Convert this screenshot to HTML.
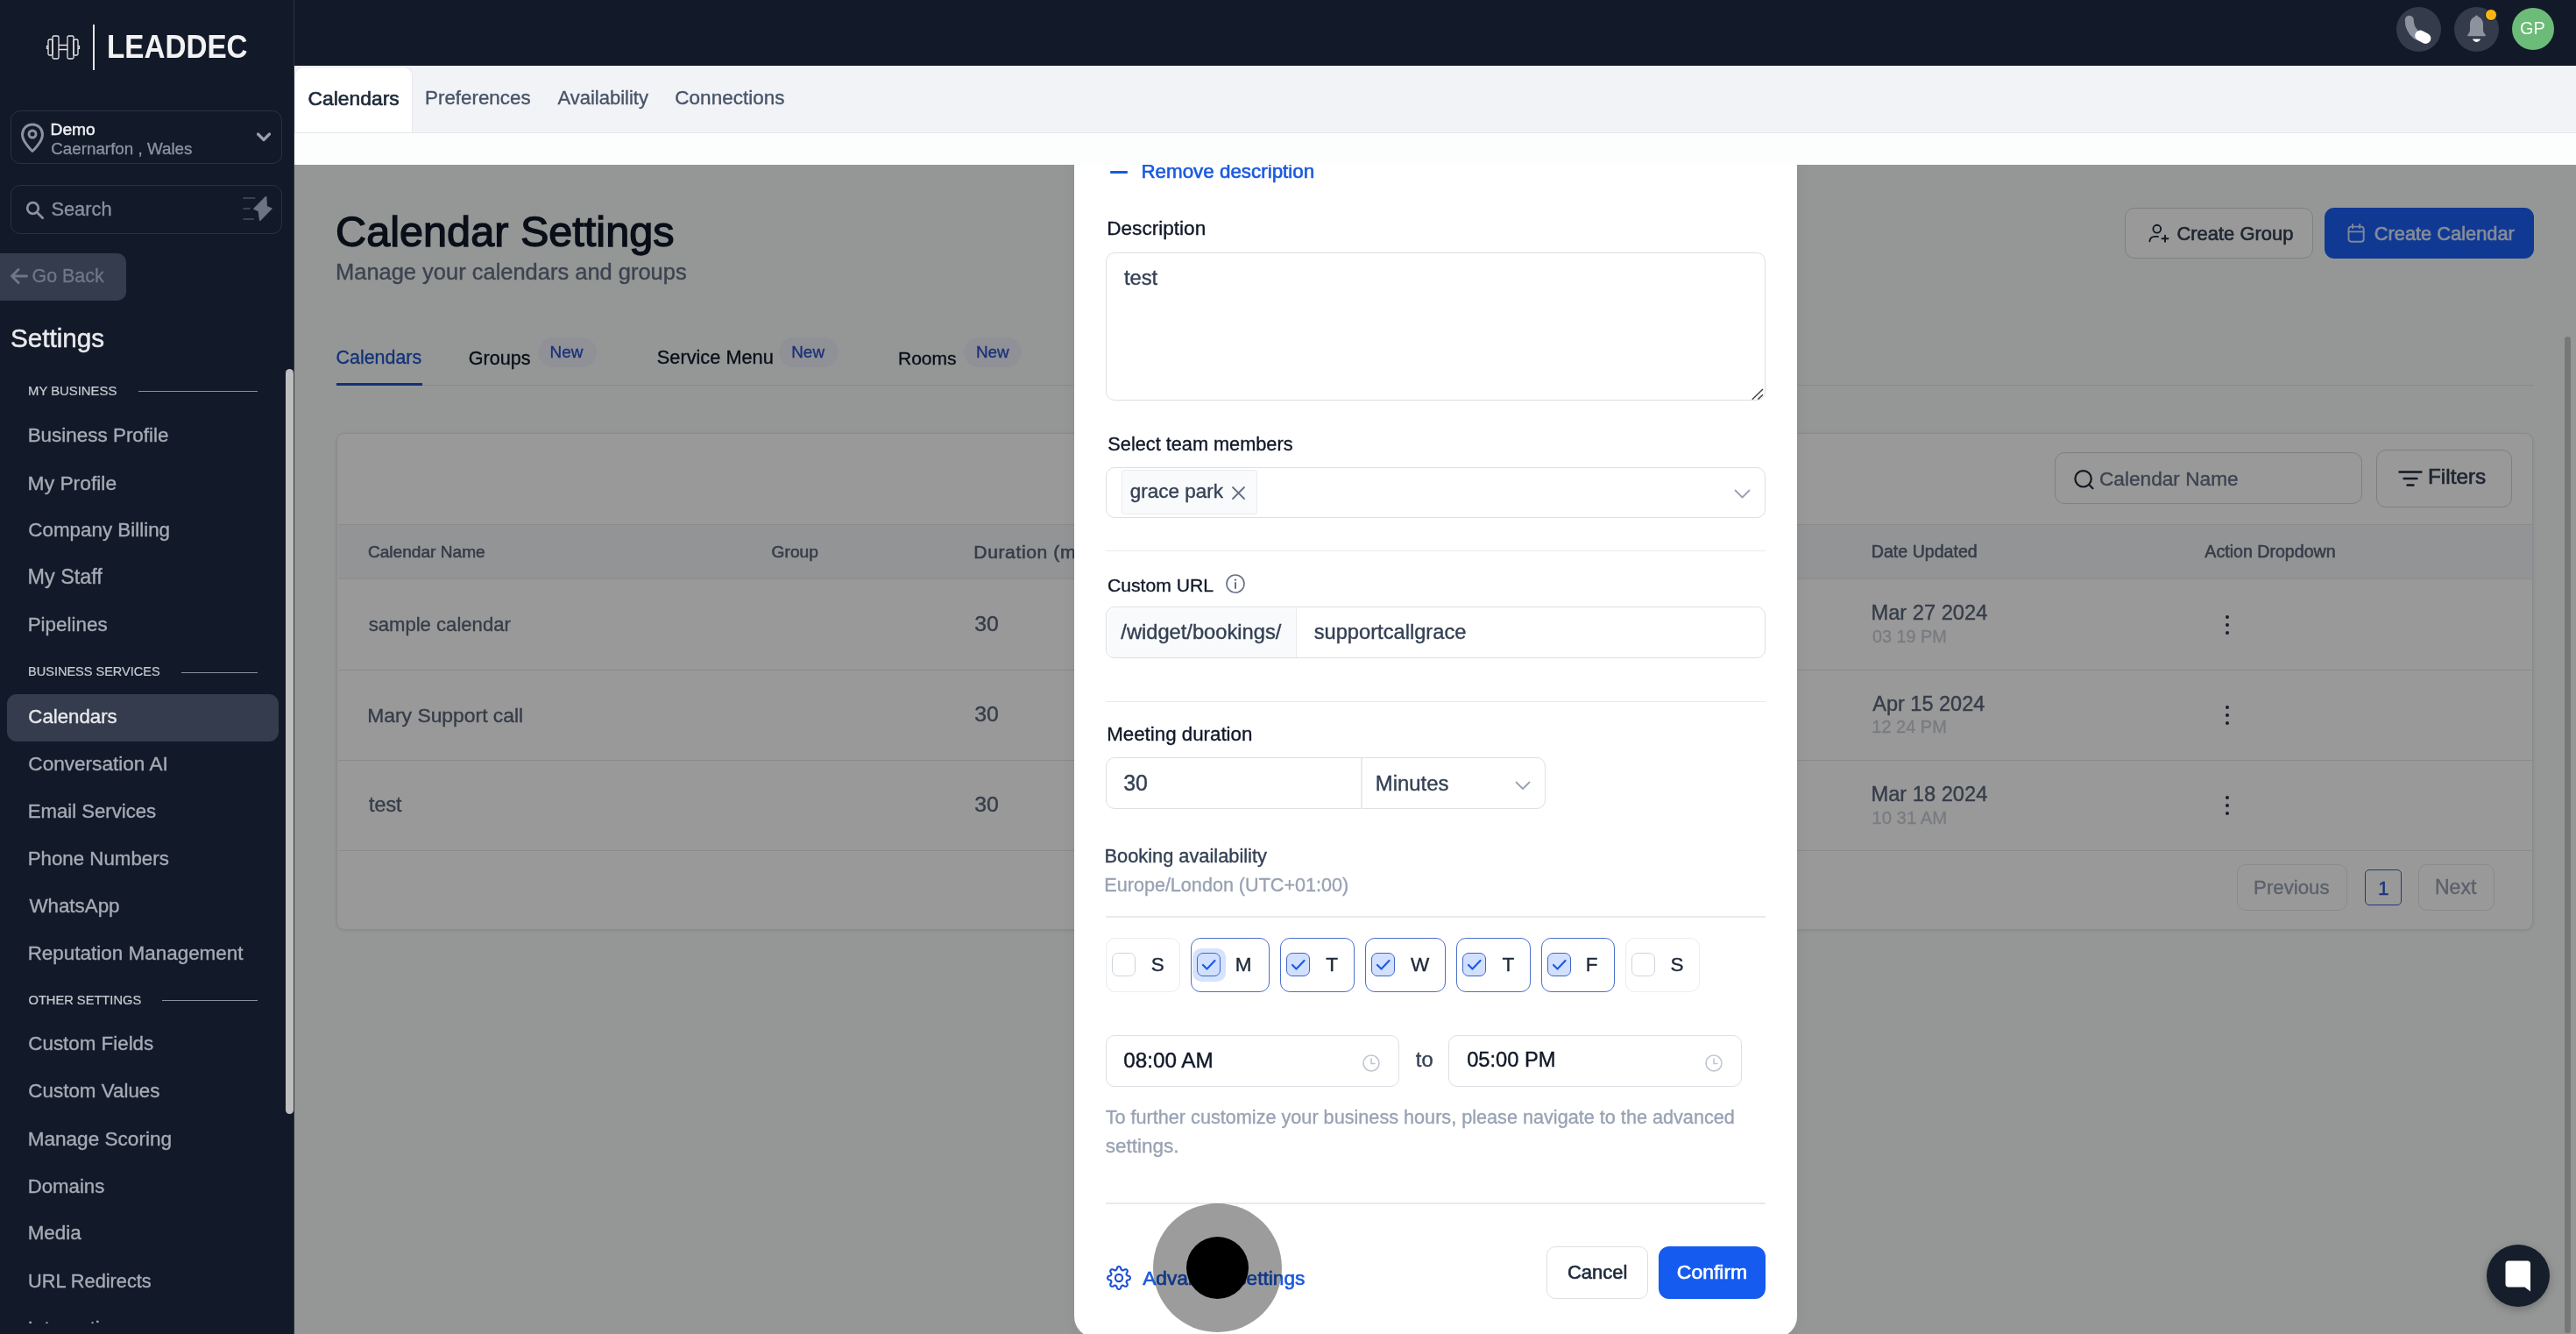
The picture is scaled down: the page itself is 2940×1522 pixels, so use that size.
<!DOCTYPE html>
<html><head><meta charset="utf-8"><style>
html,body{margin:0;padding:0;width:2940px;height:1522px;overflow:hidden;background:#ffffff;font-family:"Liberation Sans",sans-serif;}
.L{position:absolute;left:0;top:0;width:2940px;height:1522px;will-change:transform;}
.L>div,.L>span,.L>svg{position:absolute;box-sizing:border-box;}
.L>span{white-space:pre;}
</style></head><body>
<div class="L" id="L_page"><div style="left:336.0px;top:188.0px;width:2604.0px;height:1334.0px;background:#f9fcfb"></div>
<span style="left:383.12px;top:240.15px;font-size:48.61px;line-height:48.61px;font-weight:400;-webkit-text-stroke:1.36px #101828;color:#101828;letter-spacing:0.000px;">Calendar Settings</span>
<span style="left:383.01px;top:298.24px;font-size:25.48px;line-height:25.48px;font-weight:400;-webkit-text-stroke:0.41px #667085;color:#667085;letter-spacing:0.000px;">Manage your calendars and groups</span>
<span style="left:383.50px;top:397.66px;font-size:21.43px;line-height:21.43px;font-weight:400;-webkit-text-stroke:0.34px #1f54c9;color:#1f54c9;letter-spacing:0.000px;">Calendars</span>
<span style="left:534.69px;top:397.50px;font-size:21.62px;line-height:21.62px;font-weight:400;-webkit-text-stroke:0.35px #101828;color:#101828;letter-spacing:0.000px;">Groups</span>
<span style="left:749.82px;top:397.38px;font-size:21.75px;line-height:21.75px;font-weight:400;-webkit-text-stroke:0.35px #101828;color:#101828;letter-spacing:-0.000px;">Service Menu</span>
<span style="left:1024.95px;top:397.97px;font-size:21.06px;line-height:21.06px;font-weight:400;-webkit-text-stroke:0.34px #101828;color:#101828;letter-spacing:0.000px;">Rooms</span>
<div style="left:613.6px;top:385.4px;width:67.1px;height:33.9px;background:#eff2fb;border-radius:17px"></div>
<span style="left:627.52px;top:392.88px;font-size:18.92px;line-height:18.92px;font-weight:400;-webkit-text-stroke:0.30px #2b50c8;color:#2b50c8;letter-spacing:-0.000px;">New</span>
<div style="left:889.3px;top:385.4px;width:67.4px;height:33.9px;background:#eff2fb;border-radius:17px"></div>
<span style="left:903.22px;top:392.88px;font-size:18.92px;line-height:18.92px;font-weight:400;-webkit-text-stroke:0.30px #2b50c8;color:#2b50c8;letter-spacing:-0.000px;">New</span>
<div style="left:1100.0px;top:385.4px;width:66.0px;height:33.9px;background:#eff2fb;border-radius:17px"></div>
<span style="left:1113.92px;top:392.88px;font-size:18.92px;line-height:18.92px;font-weight:400;-webkit-text-stroke:0.30px #2b50c8;color:#2b50c8;letter-spacing:-0.000px;">New</span>
<div style="left:384.0px;top:438.5px;width:2508.0px;height:1.5px;background:#e4e7ec"></div>
<div style="left:384.0px;top:437.0px;width:98.0px;height:3.3px;background:#1f54c9"></div>
<div style="left:2425.4px;top:236.6px;width:214.9px;height:58.7px;background:#fff;border:1.5px solid #d0d5dd;border-radius:11px"></div>
<svg style="left:2451.0px;top:253.0px;" width="26.0" height="26.0" viewBox="0 0 26 26" fill="none"><circle cx="10.8" cy="8.2" r="4.4" stroke="#1d2939" stroke-width="1.9"/><path d="M2.4 22.2c.4-3.2 3-5.3 6.4-5.3h3.2" stroke="#1d2939" stroke-width="1.9" stroke-linecap="round"/><path d="M20 15.8v7M16.5 19.3h7" stroke="#1d2939" stroke-width="1.9" stroke-linecap="round"/></svg>
<span style="left:2484.47px;top:255.73px;font-size:21.94px;line-height:21.94px;font-weight:400;-webkit-text-stroke:0.61px #344054;color:#344054;letter-spacing:0.000px;">Create Group</span>
<div style="left:2653.2px;top:236.6px;width:238.6px;height:58.7px;background:#1a5ff5;border-radius:11px"></div>
<svg style="left:2678.0px;top:254.0px;" width="23.0" height="24.0" viewBox="0 0 23 24" fill="none"><rect x="2.5" y="4.6" width="17.2" height="17.2" rx="3" stroke="#d6e2ff" stroke-width="1.9"/><path d="M2.5 10.4h17.2M7 2v4.2M15.2 2v4.2" stroke="#d6e2ff" stroke-width="1.9" stroke-linecap="round"/></svg>
<span style="left:2709.78px;top:255.83px;font-size:21.82px;line-height:21.82px;font-weight:400;-webkit-text-stroke:0.61px #dfe8ff;color:#dfe8ff;letter-spacing:0.000px;">Create Calendar</span>
<div style="left:384.4px;top:494.4px;width:2507.0px;height:566.9px;background:#fff;border:1.5px solid #e4e7ec;border-radius:9px;box-shadow:0 1px 4px rgba(16,24,40,0.10)"></div>
<div style="left:2345.2px;top:516.4px;width:351.2px;height:59.1px;background:#fff;border:1.5px solid #d0d5dd;border-radius:11px"></div>
<svg style="left:2366.0px;top:535.0px;" width="26.0" height="26.0" viewBox="0 0 26 26" fill="none"><circle cx="11.6" cy="11.3" r="9.2" stroke="#1d2939" stroke-width="2.2"/><path d="M18.5 18.2l4 4" stroke="#1d2939" stroke-width="2.2" stroke-linecap="round"/></svg>
<span style="left:2395.94px;top:534.71px;font-size:22.67px;line-height:22.67px;font-weight:400;-webkit-text-stroke:0.36px #667085;color:#667085;letter-spacing:0.000px;">Calendar Name</span>
<div style="left:2712.1px;top:513.0px;width:154.5px;height:65.6px;background:#fff;border:1.5px solid #d0d5dd;border-radius:11px"></div>
<svg style="left:2736.0px;top:535.0px;" width="30.0" height="22.0" viewBox="0 0 30 22" fill="none"><path d="M2.5 3.5h25M7.5 11h15M11.5 18.5h7" stroke="#1d2939" stroke-width="2.4" stroke-linecap="round"/></svg>
<span style="left:2771.00px;top:532.43px;font-size:24.30px;line-height:24.30px;font-weight:400;-webkit-text-stroke:0.68px #344054;color:#344054;letter-spacing:-0.000px;">Filters</span>
<div style="left:385.5px;top:597.5px;width:2504.8px;height:63.8px;background:#f6f7f9;border-top:1.5px solid #e6e8ec;border-bottom:1.5px solid #e6e8ec"></div>
<span style="left:419.90px;top:620.32px;font-size:19.12px;line-height:19.12px;font-weight:400;-webkit-text-stroke:0.54px #5a667a;color:#5a667a;letter-spacing:0.000px;">Calendar Name</span>
<span style="left:880.60px;top:620.24px;font-size:19.21px;line-height:19.21px;font-weight:400;-webkit-text-stroke:0.54px #5a667a;color:#5a667a;letter-spacing:0.000px;">Group</span>
<span style="left:1111.35px;top:618.66px;font-size:21.08px;line-height:21.08px;font-weight:400;-webkit-text-stroke:0.59px #5a667a;color:#5a667a;letter-spacing:0.600px;">Duration (minutes)</span>
<span style="left:2135.77px;top:619.88px;font-size:19.63px;line-height:19.63px;font-weight:400;-webkit-text-stroke:0.55px #5a667a;color:#5a667a;letter-spacing:0.000px;">Date Updated</span>
<span style="left:2516.30px;top:619.90px;font-size:19.61px;line-height:19.61px;font-weight:400;-webkit-text-stroke:0.55px #5a667a;color:#5a667a;letter-spacing:0.000px;">Action Dropdown</span>
<div style="left:385.5px;top:763.5px;width:2504.8px;height:1.5px;background:#e4e7ec"></div>
<div style="left:385.5px;top:866.5px;width:2504.8px;height:1.5px;background:#e4e7ec"></div>
<div style="left:385.5px;top:969.8px;width:2504.8px;height:1.5px;background:#e4e7ec"></div>
<span style="left:420.65px;top:701.98px;font-size:22.11px;line-height:22.11px;font-weight:400;-webkit-text-stroke:0.35px #5a667a;color:#5a667a;letter-spacing:-0.000px;">sample calendar</span>
<span style="left:1112.22px;top:699.70px;font-size:24.81px;line-height:24.81px;font-weight:400;-webkit-text-stroke:0.40px #5a667a;color:#5a667a;letter-spacing:0.000px;">30</span>
<span style="left:2135.45px;top:687.96px;font-size:23.68px;line-height:23.68px;font-weight:400;-webkit-text-stroke:0.38px #5a667a;color:#5a667a;letter-spacing:-0.000px;">Mar 27 2024</span>
<span style="left:2136.98px;top:717.32px;font-size:19.82px;line-height:19.82px;font-weight:400;-webkit-text-stroke:0.32px #c9ced6;color:#c9ced6;letter-spacing:0.000px;">03 19 PM</span>
<div style="left:2539.9px;top:702.1px;width:4.4px;height:4.4px;background:#2a3346;border-radius:50%"></div>
<div style="left:2539.9px;top:710.9px;width:4.4px;height:4.4px;background:#2a3346;border-radius:50%"></div>
<div style="left:2539.9px;top:719.6px;width:4.4px;height:4.4px;background:#2a3346;border-radius:50%"></div>
<span style="left:419.21px;top:804.72px;font-size:22.89px;line-height:22.89px;font-weight:400;-webkit-text-stroke:0.37px #5a667a;color:#5a667a;letter-spacing:-0.000px;">Mary Support call</span>
<span style="left:1112.22px;top:803.10px;font-size:24.81px;line-height:24.81px;font-weight:400;-webkit-text-stroke:0.40px #5a667a;color:#5a667a;letter-spacing:0.000px;">30</span>
<span style="left:2137.30px;top:791.62px;font-size:23.49px;line-height:23.49px;font-weight:400;-webkit-text-stroke:0.38px #5a667a;color:#5a667a;letter-spacing:-0.000px;">Apr 15 2024</span>
<span style="left:2136.35px;top:820.29px;font-size:19.97px;line-height:19.97px;font-weight:400;-webkit-text-stroke:0.32px #c9ced6;color:#c9ced6;letter-spacing:0.000px;">12 24 PM</span>
<div style="left:2539.9px;top:805.1px;width:4.4px;height:4.4px;background:#2a3346;border-radius:50%"></div>
<div style="left:2539.9px;top:813.9px;width:4.4px;height:4.4px;background:#2a3346;border-radius:50%"></div>
<div style="left:2539.9px;top:822.6px;width:4.4px;height:4.4px;background:#2a3346;border-radius:50%"></div>
<span style="left:421.00px;top:906.99px;font-size:23.28px;line-height:23.28px;font-weight:400;-webkit-text-stroke:0.37px #5a667a;color:#5a667a;letter-spacing:-0.000px;">test</span>
<span style="left:1112.22px;top:905.70px;font-size:24.81px;line-height:24.81px;font-weight:400;-webkit-text-stroke:0.40px #5a667a;color:#5a667a;letter-spacing:0.000px;">30</span>
<span style="left:2135.45px;top:894.56px;font-size:23.68px;line-height:23.68px;font-weight:400;-webkit-text-stroke:0.38px #5a667a;color:#5a667a;letter-spacing:-0.000px;">Mar 18 2024</span>
<span style="left:2136.33px;top:922.99px;font-size:20.34px;line-height:20.34px;font-weight:400;-webkit-text-stroke:0.33px #c9ced6;color:#c9ced6;letter-spacing:-0.000px;">10 31 AM</span>
<div style="left:2539.9px;top:908.1px;width:4.4px;height:4.4px;background:#2a3346;border-radius:50%"></div>
<div style="left:2539.9px;top:916.9px;width:4.4px;height:4.4px;background:#2a3346;border-radius:50%"></div>
<div style="left:2539.9px;top:925.6px;width:4.4px;height:4.4px;background:#2a3346;border-radius:50%"></div>
<div style="left:2553.0px;top:986.2px;width:126.0px;height:53.1px;background:#fff;border:1.5px solid #e4e7ec;border-radius:10px"></div>
<span style="left:2572.06px;top:1001.87px;font-size:22.24px;line-height:22.24px;font-weight:400;-webkit-text-stroke:0.36px #98a2b3;color:#98a2b3;letter-spacing:-0.000px;">Previous</span>
<div style="left:2699.0px;top:992.0px;width:42.0px;height:41.0px;background:#fff;border:1.5px solid #3a62cc;border-radius:5px"></div>
<span style="left:2713.98px;top:1001.51px;font-size:22.67px;line-height:22.67px;font-weight:400;-webkit-text-stroke:0.36px #2a59cf;color:#2a59cf;letter-spacing:0.000px;">1</span>
<div style="left:2760.0px;top:986.2px;width:87.2px;height:53.1px;background:#fff;border:1.5px solid #e4e7ec;border-radius:10px"></div>
<span style="left:2779.00px;top:1001.22px;font-size:23.01px;line-height:23.01px;font-weight:400;-webkit-text-stroke:0.37px #98a2b3;color:#98a2b3;letter-spacing:0.000px;">Next</span>
<div style="left:2926.5px;top:384.4px;width:7.5px;height:1136.6px;background:#c6c6c6;border-radius:4px"></div></div>
<div class="L" id="L_overlay"><div style="left:336.0px;top:188.0px;width:2604.0px;height:1334.0px;background:rgba(0,0,0,0.4)"></div></div>
<div class="L" id="L_modal"><div style="left:1226.0px;top:120.0px;width:825.0px;height:1406.0px;background:#fff;border-radius:24px;box-shadow:0 0 16px rgba(16,24,40,0.06)"></div>
<div style="left:1266.6px;top:195.2px;width:20.4px;height:2.6px;background:#1a5ae0;border-radius:1px"></div>
<span style="left:1302.45px;top:184.65px;font-size:22.38px;line-height:22.38px;font-weight:400;-webkit-text-stroke:0.63px #1a5ae0;color:#1a5ae0;letter-spacing:0.000px;">Remove description</span>
<span style="left:1263.23px;top:250.37px;font-size:22.60px;line-height:22.60px;font-weight:400;-webkit-text-stroke:0.36px #101828;color:#101828;letter-spacing:0.000px;">Description</span>
<div style="left:1261.8px;top:287.6px;width:753.0px;height:169.4px;background:#fff;border:1.5px solid #dcdfe3;border-radius:10px"></div>
<span style="left:1283.00px;top:306.13px;font-size:23.71px;line-height:23.71px;font-weight:400;-webkit-text-stroke:0.38px #344054;color:#344054;letter-spacing:-0.000px;">test</span>
<svg style="left:1998.0px;top:441.5px;" width="16.0" height="16.0" viewBox="0 0 16 16" fill="none"><path d="M1.8 13.8L14 2M8.3 13.6L14 8.2" stroke="#454545" stroke-width="1.5"/></svg>
<span style="left:1264.32px;top:495.60px;font-size:21.73px;line-height:21.73px;font-weight:400;-webkit-text-stroke:0.35px #101828;color:#101828;letter-spacing:0.000px;">Select team members</span>
<div style="left:1261.8px;top:532.6px;width:753.0px;height:58.1px;background:#fff;border:1.5px solid #dcdfe3;border-radius:10px"></div>
<div style="left:1280.3px;top:536.3px;width:154.4px;height:50.3px;background:#f9fafb;border:1.5px solid #eaecf0;border-radius:3px"></div>
<span style="left:1289.80px;top:549.76px;font-size:22.49px;line-height:22.49px;font-weight:400;-webkit-text-stroke:0.36px #344054;color:#344054;letter-spacing:-0.000px;">grace park</span>
<svg style="left:1405.0px;top:554.0px;" width="17.0" height="17.0" viewBox="0 0 17 17" fill="none"><path d="M2 2l13 13M15 2L2 15" stroke="#667085" stroke-width="1.8" stroke-linecap="round"/></svg>
<svg style="left:1979.0px;top:557.0px;" width="19.0" height="13.0" viewBox="0 0 19 13" fill="none"><path d="M1.5 2.5l8 8 8-8" stroke="#98a2b3" stroke-width="1.8" stroke-linecap="round" stroke-linejoin="round"/></svg>
<div style="left:1261.8px;top:627.7px;width:753.0px;height:1.5px;background:#e9eaed"></div>
<span style="left:1264.01px;top:656.60px;font-size:21.14px;line-height:21.14px;font-weight:400;-webkit-text-stroke:0.34px #101828;color:#101828;letter-spacing:-0.000px;">Custom URL</span>
<svg style="left:1398.0px;top:654.0px;" width="24.0" height="24.0" viewBox="0 0 24 24" fill="none"><circle cx="12" cy="12" r="10" stroke="#667085" stroke-width="1.6"/><path d="M12 11v6" stroke="#667085" stroke-width="2" stroke-linecap="round"/><circle cx="12" cy="7.6" r="1.2" fill="#667085"/></svg>
<div style="left:1261.8px;top:692.2px;width:753.0px;height:59.1px;background:#fff;border:1.5px solid #dcdfe3;border-radius:10px"></div>
<div style="left:1263.5px;top:693.5px;width:216.0px;height:56.5px;background:#f9fafb;border-right:1.5px solid #eaecf0;border-radius:11px 0 0 11px"></div>
<span style="left:1279.30px;top:709.75px;font-size:23.69px;line-height:23.69px;font-weight:400;-webkit-text-stroke:0.38px #344054;color:#344054;letter-spacing:-0.000px;">/widget/bookings/</span>
<span style="left:1499.63px;top:709.75px;font-size:23.69px;line-height:23.69px;font-weight:400;-webkit-text-stroke:0.38px #344054;color:#344054;letter-spacing:-0.000px;">supportcallgrace</span>
<div style="left:1261.8px;top:799.8px;width:753.0px;height:1.5px;background:#e9eaed"></div>
<span style="left:1263.26px;top:827.11px;font-size:22.31px;line-height:22.31px;font-weight:400;-webkit-text-stroke:0.36px #101828;color:#101828;letter-spacing:-0.000px;">Meeting duration</span>
<div style="left:1261.8px;top:864.1px;width:501.9px;height:59.4px;background:#fff;border:1.5px solid #dcdfe3;border-radius:10px"></div>
<div style="left:1553.0px;top:865.0px;width:1.5px;height:57.5px;background:#e9eaed"></div>
<span style="left:1282.22px;top:881.32px;font-size:24.90px;line-height:24.90px;font-weight:400;-webkit-text-stroke:0.40px #344054;color:#344054;letter-spacing:-0.000px;">30</span>
<span style="left:1569.83px;top:882.19px;font-size:23.88px;line-height:23.88px;font-weight:400;-webkit-text-stroke:0.38px #344054;color:#344054;letter-spacing:0.000px;">Minutes</span>
<svg style="left:1729.0px;top:890.0px;" width="18.0" height="13.0" viewBox="0 0 18 13" fill="none"><path d="M1.5 2.5l7.5 7.5 7.5-7.5" stroke="#98a2b3" stroke-width="1.8" stroke-linecap="round" stroke-linejoin="round"/></svg>
<span style="left:1260.50px;top:965.94px;font-size:21.81px;line-height:21.81px;font-weight:400;-webkit-text-stroke:0.35px #344054;color:#344054;letter-spacing:-0.000px;">Booking availability</span>
<span style="left:1260.31px;top:999.33px;font-size:21.59px;line-height:21.59px;font-weight:400;-webkit-text-stroke:0.35px #98a2b3;color:#98a2b3;letter-spacing:0.000px;">Europe/London (UTC+01:00)</span>
<div style="left:1261.8px;top:1045.0px;width:753.0px;height:1.5px;background:#e9eaed"></div>
<div style="left:1262.2px;top:1070.2px;width:84.7px;height:61.4px;background:#fff;border:1.5px solid #eaecf0;border-radius:11px"></div>
<div style="left:1269.2px;top:1087.4px;width:27.0px;height:27.0px;background:#fff;border:1.5px solid #d0d5dd;border-radius:7px"></div>
<span style="left:1313.70px;top:1089.73px;font-size:22.53px;line-height:22.53px;font-weight:400;-webkit-text-stroke:0.36px #1d2939;color:#1d2939;letter-spacing:0.000px;">S</span>
<div style="left:1359.0px;top:1070.2px;width:89.9px;height:61.4px;background:#fff;border:1.4px solid #4a70cc;border-radius:11px"></div>
<div style="left:1361.0px;top:1081.5px;width:37.5px;height:38.5px;background:#d6e3fd;border-radius:10px"></div>
<div style="left:1366.0px;top:1087.4px;width:27.0px;height:27.0px;background:#d1e0ff;border:1.4px solid #4066c8;border-radius:7px"></div>
<svg style="left:1369.0px;top:1090.4px;" width="21.0" height="21.0" viewBox="0 0 21 21" fill="none"><path d="M4 11l4.5 4.5L17.5 6" stroke="#1f5ae0" stroke-width="2.2" stroke-linecap="round" stroke-linejoin="round"/></svg>
<span style="left:1409.84px;top:1089.73px;font-size:22.53px;line-height:22.53px;font-weight:400;-webkit-text-stroke:0.36px #1d2939;color:#1d2939;letter-spacing:0.000px;">M</span>
<div style="left:1461.1px;top:1070.2px;width:84.5px;height:61.4px;background:#fff;border:1.4px solid #4a70cc;border-radius:11px"></div>
<div style="left:1468.1px;top:1087.4px;width:27.0px;height:27.0px;background:#d1e0ff;border:1.4px solid #4066c8;border-radius:7px"></div>
<svg style="left:1471.1px;top:1090.4px;" width="21.0" height="21.0" viewBox="0 0 21 21" fill="none"><path d="M4 11l4.5 4.5L17.5 6" stroke="#1f5ae0" stroke-width="2.2" stroke-linecap="round" stroke-linejoin="round"/></svg>
<span style="left:1513.15px;top:1089.73px;font-size:22.53px;line-height:22.53px;font-weight:400;-webkit-text-stroke:0.36px #1d2939;color:#1d2939;letter-spacing:0.000px;">T</span>
<div style="left:1558.0px;top:1070.2px;width:91.6px;height:61.4px;background:#fff;border:1.4px solid #4a70cc;border-radius:11px"></div>
<div style="left:1565.0px;top:1087.4px;width:27.0px;height:27.0px;background:#d1e0ff;border:1.4px solid #4066c8;border-radius:7px"></div>
<svg style="left:1568.0px;top:1090.4px;" width="21.0" height="21.0" viewBox="0 0 21 21" fill="none"><path d="M4 11l4.5 4.5L17.5 6" stroke="#1f5ae0" stroke-width="2.2" stroke-linecap="round" stroke-linejoin="round"/></svg>
<span style="left:1610.00px;top:1089.73px;font-size:22.53px;line-height:22.53px;font-weight:400;-webkit-text-stroke:0.36px #1d2939;color:#1d2939;letter-spacing:0.000px;">W</span>
<div style="left:1661.9px;top:1070.2px;width:84.7px;height:61.4px;background:#fff;border:1.4px solid #4a70cc;border-radius:11px"></div>
<div style="left:1668.9px;top:1087.4px;width:27.0px;height:27.0px;background:#d1e0ff;border:1.4px solid #4066c8;border-radius:7px"></div>
<svg style="left:1671.9px;top:1090.4px;" width="21.0" height="21.0" viewBox="0 0 21 21" fill="none"><path d="M4 11l4.5 4.5L17.5 6" stroke="#1f5ae0" stroke-width="2.2" stroke-linecap="round" stroke-linejoin="round"/></svg>
<span style="left:1714.55px;top:1089.73px;font-size:22.53px;line-height:22.53px;font-weight:400;-webkit-text-stroke:0.36px #1d2939;color:#1d2939;letter-spacing:0.000px;">T</span>
<div style="left:1759.0px;top:1070.2px;width:84.0px;height:61.4px;background:#fff;border:1.4px solid #4a70cc;border-radius:11px"></div>
<div style="left:1766.0px;top:1087.4px;width:27.0px;height:27.0px;background:#d1e0ff;border:1.4px solid #4066c8;border-radius:7px"></div>
<svg style="left:1769.0px;top:1090.4px;" width="21.0" height="21.0" viewBox="0 0 21 21" fill="none"><path d="M4 11l4.5 4.5L17.5 6" stroke="#1f5ae0" stroke-width="2.2" stroke-linecap="round" stroke-linejoin="round"/></svg>
<span style="left:1809.74px;top:1089.73px;font-size:22.53px;line-height:22.53px;font-weight:400;-webkit-text-stroke:0.36px #1d2939;color:#1d2939;letter-spacing:0.000px;">F</span>
<div style="left:1855.3px;top:1070.2px;width:84.4px;height:61.4px;background:#fff;border:1.5px solid #eaecf0;border-radius:11px"></div>
<div style="left:1862.3px;top:1087.4px;width:27.0px;height:27.0px;background:#fff;border:1.5px solid #d0d5dd;border-radius:7px"></div>
<span style="left:1906.50px;top:1089.73px;font-size:22.53px;line-height:22.53px;font-weight:400;-webkit-text-stroke:0.36px #1d2939;color:#1d2939;letter-spacing:0.000px;">S</span>
<div style="left:1261.8px;top:1180.6px;width:335.5px;height:59.1px;background:#fff;border:1.5px solid #dcdfe3;border-radius:10px"></div>
<div style="left:1653.4px;top:1180.6px;width:335.1px;height:59.1px;background:#fff;border:1.5px solid #dcdfe3;border-radius:10px"></div>
<span style="left:1282.24px;top:1197.65px;font-size:24.27px;line-height:24.27px;font-weight:400;-webkit-text-stroke:0.39px #101828;color:#101828;letter-spacing:0.000px;">08:00 AM</span>
<span style="left:1615.80px;top:1198.14px;font-size:23.69px;line-height:23.69px;font-weight:400;-webkit-text-stroke:0.38px #344054;color:#344054;letter-spacing:0.000px;">to</span>
<span style="left:1674.16px;top:1198.14px;font-size:23.70px;line-height:23.70px;font-weight:400;-webkit-text-stroke:0.38px #101828;color:#101828;letter-spacing:-0.000px;">05:00 PM</span>
<svg style="left:1554.0px;top:1202.0px;" width="22.0" height="22.0" viewBox="0 0 22 22" fill="none"><circle cx="11" cy="11" r="9" stroke="#c0c6d0" stroke-width="1.6"/><path d="M11 6v5.5h4" stroke="#c0c6d0" stroke-width="1.6" stroke-linecap="round"/></svg>
<svg style="left:1945.2px;top:1202.0px;" width="22.0" height="22.0" viewBox="0 0 22 22" fill="none"><circle cx="11" cy="11" r="9" stroke="#c0c6d0" stroke-width="1.6"/><path d="M11 6v5.5h4" stroke="#c0c6d0" stroke-width="1.6" stroke-linecap="round"/></svg>
<span style="left:1261.66px;top:1263.67px;font-size:21.65px;line-height:21.65px;font-weight:400;-webkit-text-stroke:0.35px #98a2b3;color:#98a2b3;letter-spacing:-0.000px;">To further customize your business hours, please navigate to the advanced</span>
<span style="left:1261.65px;top:1297.13px;font-size:22.53px;line-height:22.53px;font-weight:400;-webkit-text-stroke:0.36px #98a2b3;color:#98a2b3;letter-spacing:-0.000px;">settings.</span>
<div style="left:1261.8px;top:1372.1px;width:753.0px;height:1.5px;background:#e9eaed"></div>
<svg style="left:1260.8px;top:1441.7px;" width="32.0" height="32.0" viewBox="0 0 32 32" fill="none"><path d="M16.00 3.05 L16.51 3.11 L17.00 3.30 L17.47 3.61 L17.89 4.08 L18.19 5.02 L18.41 5.95 L18.69 6.44 L18.98 6.81 L19.29 7.09 L19.62 7.27 L19.98 7.37 L20.39 7.39 L20.85 7.34 L21.40 7.19 L22.22 6.69 L23.09 6.24 L23.72 6.21 L24.27 6.31 L24.76 6.53 L25.16 6.84 L25.47 7.24 L25.69 7.73 L25.79 8.28 L25.76 8.91 L25.31 9.78 L24.81 10.60 L24.66 11.15 L24.61 11.61 L24.63 12.02 L24.73 12.38 L24.91 12.71 L25.19 13.02 L25.56 13.31 L26.05 13.59 L26.98 13.81 L27.92 14.11 L28.39 14.53 L28.70 15.00 L28.89 15.49 L28.95 16.00 L28.89 16.51 L28.70 17.00 L28.39 17.47 L27.92 17.89 L26.98 18.19 L26.05 18.41 L25.56 18.69 L25.19 18.98 L24.91 19.29 L24.73 19.62 L24.63 19.98 L24.61 20.39 L24.66 20.85 L24.81 21.40 L25.31 22.22 L25.76 23.09 L25.79 23.72 L25.69 24.27 L25.47 24.76 L25.16 25.16 L24.76 25.47 L24.27 25.69 L23.72 25.79 L23.09 25.76 L22.22 25.31 L21.40 24.81 L20.85 24.66 L20.39 24.61 L19.98 24.63 L19.62 24.73 L19.29 24.91 L18.98 25.19 L18.69 25.56 L18.41 26.05 L18.19 26.98 L17.89 27.92 L17.47 28.39 L17.00 28.70 L16.51 28.89 L16.00 28.95 L15.49 28.89 L15.00 28.70 L14.53 28.39 L14.11 27.92 L13.81 26.98 L13.59 26.05 L13.31 25.56 L13.02 25.19 L12.71 24.91 L12.38 24.73 L12.02 24.63 L11.61 24.61 L11.15 24.66 L10.60 24.81 L9.78 25.31 L8.91 25.76 L8.28 25.79 L7.73 25.69 L7.24 25.47 L6.84 25.16 L6.53 24.76 L6.31 24.27 L6.21 23.72 L6.24 23.09 L6.69 22.22 L7.19 21.40 L7.34 20.85 L7.39 20.39 L7.37 19.98 L7.27 19.62 L7.09 19.29 L6.81 18.98 L6.44 18.69 L5.95 18.41 L5.02 18.19 L4.08 17.89 L3.61 17.47 L3.30 17.00 L3.11 16.51 L3.05 16.00 L3.11 15.49 L3.30 15.00 L3.61 14.53 L4.08 14.11 L5.02 13.81 L5.95 13.59 L6.44 13.31 L6.81 13.02 L7.09 12.71 L7.27 12.38 L7.37 12.02 L7.39 11.61 L7.34 11.15 L7.19 10.60 L6.69 9.78 L6.24 8.91 L6.21 8.28 L6.31 7.73 L6.53 7.24 L6.84 6.84 L7.24 6.53 L7.73 6.31 L8.28 6.21 L8.91 6.24 L9.78 6.69 L10.60 7.19 L11.15 7.34 L11.61 7.39 L12.02 7.37 L12.38 7.27 L12.71 7.09 L13.02 6.81 L13.31 6.44 L13.59 5.95 L13.81 5.02 L14.11 4.08 L14.53 3.61 L15.00 3.30 L15.49 3.11Z" stroke="#1a4fd6" stroke-width="2.1" stroke-linejoin="round"/><circle cx="16" cy="16" r="4.1" stroke="#1a4fd6" stroke-width="2.1"/></svg>
<span style="left:1304.20px;top:1447.21px;font-size:22.66px;line-height:22.66px;font-weight:400;-webkit-text-stroke:0.63px #1a5ae0;color:#1a5ae0;letter-spacing:0.000px;">Advanced settings</span>
<div style="left:1765.3px;top:1422.0px;width:115.5px;height:59.8px;background:#fff;border:1.5px solid #dcdfe3;border-radius:10px"></div>
<span style="left:1788.97px;top:1441.41px;font-size:21.97px;line-height:21.97px;font-weight:400;-webkit-text-stroke:0.62px #1d2939;color:#1d2939;letter-spacing:0.000px;">Cancel</span>
<div style="left:1893.0px;top:1422.0px;width:122.1px;height:59.8px;background:#155bef;border-radius:12px"></div>
<span style="left:1913.82px;top:1440.37px;font-size:22.96px;line-height:22.96px;font-weight:400;-webkit-text-stroke:0.64px #ffffff;color:#ffffff;letter-spacing:0.000px;">Confirm</span></div>
<div class="L" id="L_top"><div style="left:336.0px;top:0.0px;width:2604.0px;height:75.0px;background:#121928"></div>
<div style="left:336.0px;top:75.0px;width:2604.0px;height:77.0px;background:#f2f3f7;border-bottom:1.5px solid #e4e7ec"></div>
<div style="left:336.0px;top:75.5px;width:135.0px;height:75.5px;background:#fff;border:1.5px solid #e6e8ec;border-bottom:none;border-radius:10px 10px 0 0"></div>
<span style="left:351.53px;top:100.65px;font-size:22.86px;line-height:22.86px;font-weight:400;-webkit-text-stroke:0.64px #1d2939;color:#1d2939;letter-spacing:0.000px;">Calendars</span>
<span style="left:485.05px;top:101.07px;font-size:22.36px;line-height:22.36px;font-weight:400;-webkit-text-stroke:0.36px #475467;color:#475467;letter-spacing:-0.000px;">Preferences</span>
<span style="left:636.50px;top:101.38px;font-size:21.99px;line-height:21.99px;font-weight:400;-webkit-text-stroke:0.35px #475467;color:#475467;letter-spacing:-0.000px;">Availability</span>
<span style="left:770.34px;top:100.93px;font-size:22.53px;line-height:22.53px;font-weight:400;-webkit-text-stroke:0.36px #475467;color:#475467;letter-spacing:0.000px;">Connections</span>
<div style="left:336.0px;top:152.0px;width:2604.0px;height:36.0px;background:#fcfdfd"></div>
<div style="left:2735.2px;top:7.9px;width:50.7px;height:51.0px;background:#343c4c;border-radius:50%"></div>
<svg style="left:2740.0px;top:12.0px;" width="40.0" height="40.0" viewBox="0 0 40 40" fill="none"><path d="M9.8 10.7C9.6 17 12 23 17.8 28" stroke="#8c929e" stroke-width="10" stroke-linecap="round"/><rect x="-9.5" y="-6" width="19" height="12" rx="6" fill="#ffffff" transform="translate(25.3 30.2) rotate(27)"/></svg>
<div style="left:2800.9px;top:7.9px;width:51.1px;height:51.0px;background:#343c4c;border-radius:50%"></div>
<svg style="left:2812.0px;top:15.0px;" width="29.0" height="35.0" viewBox="0 0 29 35" fill="none"><path d="M14.5 2.5c-.9 0-1.5.6-1.7 1.4C9.1 5 7 8.4 7 12.6v6.2c0 2.3-1.2 4.2-2.5 5.6-.6.6-.3 1.9.8 1.9h18.4c1.1 0 1.4-1.3.8-1.9-1.3-1.4-2.5-3.3-2.5-5.6v-6.2c0-4.2-2.1-7.6-5.8-8.7-.2-.8-.8-1.4-1.7-1.4z" fill="#8c929e"/><path d="M10 29.6h9c-.5 1.9-2.3 3.3-4.5 3.3s-4-1.4-4.5-3.3z" fill="#ffffff"/></svg>
<div style="left:2835.8px;top:9.7px;width:14.2px;height:14.2px;background:#fbb614;border:1.5px solid #131a29;border-radius:50%"></div>
<div style="left:2866.8px;top:8.9px;width:48.2px;height:48.2px;background:#6dbb78;border-radius:50%"></div>
<span style="left:2876.07px;top:23.14px;font-size:19.91px;line-height:19.91px;font-weight:400;color:#f2fff2;letter-spacing:0.000px;">GP</span>
<div style="left:2838.0px;top:1420.2px;width:71.9px;height:71.3px;background:#161e2b;border-radius:50%;box-shadow:0 3px 10px rgba(0,0,0,0.25)"></div>
<svg style="left:2858.0px;top:1437.0px;" width="33.0" height="39.0" viewBox="0 0 33 39" fill="none"><path d="M5 1.5h21.5c2.2 0 3.5 1.3 3.5 3.5v31.5L23.5 31.5H5c-2.2 0-3.5-1.3-3.5-3.5V5c0-2.2 1.3-3.5 3.5-3.5z" fill="#fff"/></svg>
<div style="left:0.0px;top:0.0px;width:336.0px;height:1522.0px;background:#121928;border-right:1px solid #2d3442"></div>
<svg style="left:50.0px;top:38.0px;" width="44.0" height="32.0" viewBox="0 0 44 32" fill="none"><rect x="10" y="3" width="7" height="26" rx="1.5" stroke="#e8e8e8" stroke-width="1.3"/><rect x="27" y="3" width="7" height="26" rx="1.5" stroke="#e8e8e8" stroke-width="1.3"/><rect x="5" y="7" width="5" height="18" rx="1.5" stroke="#e8e8e8" stroke-width="1.3"/><rect x="34" y="7" width="5" height="18" rx="1.5" stroke="#e8e8e8" stroke-width="1.3"/><path d="M17 13.5h10M17 18.5h10" stroke="#e8e8e8" stroke-width="1.3"/><path d="M5 14.5h-1.5v3H5M39 14.5h1.5v3H39" stroke="#e8e8e8" stroke-width="1.2"/></svg>
<div style="left:106.0px;top:28.0px;width:2.2px;height:52.0px;background:#e6e6e6"></div>
<span style="left:122.22px;top:36.49px;font-size:36.05px;line-height:36.05px;font-weight:700;color:#f2f2f2;letter-spacing:0.000px;transform:scaleX(0.9218);transform-origin:0 0;">LEADDEC</span>
<div style="left:12.4px;top:126.2px;width:310.0px;height:61.2px;border:1.5px solid #2a3242;border-radius:11px"></div>
<svg style="left:22.0px;top:139.0px;" width="30.0" height="36.0" viewBox="0 0 30 36" fill="none"><path d="M15 33.5c0 0-11.5-10.5-11.5-19C3.5 8 8.5 3 15 3s11.5 5 11.5 11.5c0 8.5-11.5 19-11.5 19z" stroke="#8b919d" stroke-width="3" stroke-linejoin="round"/><circle cx="15" cy="14" r="4" stroke="#8b919d" stroke-width="3"/></svg>
<span style="left:57.60px;top:137.53px;font-size:19.22px;line-height:19.22px;font-weight:400;-webkit-text-stroke:0.54px #eceef1;color:#eceef1;letter-spacing:0.000px;">Demo</span>
<span style="left:58.22px;top:160.77px;font-size:18.81px;line-height:18.81px;font-weight:400;-webkit-text-stroke:0.30px #8d94a0;color:#8d94a0;letter-spacing:-0.000px;">Caernarfon , Wales</span>
<svg style="left:292.0px;top:150.0px;" width="18.0" height="14.0" viewBox="0 0 18 14" fill="none"><path d="M2.5 3l6.5 6.5L15.5 3" stroke="#9aa0aa" stroke-width="3.2" stroke-linecap="round" stroke-linejoin="round"/></svg>
<div style="left:12.4px;top:211.2px;width:310.0px;height:55.5px;border:1.5px solid #2a3242;border-radius:11px"></div>
<svg style="left:28.0px;top:228.0px;" width="24.0" height="24.0" viewBox="0 0 24 24" fill="none"><circle cx="9.5" cy="9.5" r="6.3" stroke="#8b919d" stroke-width="2.8"/><path d="M14.2 14.2l6.5 6.5" stroke="#8b919d" stroke-width="2.8" stroke-linecap="round"/></svg>
<span style="left:58.42px;top:227.51px;font-size:21.84px;line-height:21.84px;font-weight:400;-webkit-text-stroke:0.35px #8a919d;color:#8a919d;letter-spacing:-0.000px;">Search</span>
<svg style="left:276.0px;top:222.0px;" width="38.0" height="32.0" viewBox="0 0 38 32" fill="none"><path d="M2.2 4h12.4M2.2 16h6.6M2.2 28h10.8" stroke="#3a4251" stroke-width="2.1" stroke-linecap="round"/><path d="M27.6 2.6L14 16.3L19.3 18.4L20.8 29.3L33.8 15.9L28.2 13.8Z" fill="#6c7383" stroke="#6c7383" stroke-width="1.6" stroke-linejoin="round"/></svg>
<div style="left:-12.0px;top:289.1px;width:156.0px;height:53.5px;background:#343c4d;border-radius:10px"></div>
<svg style="left:11.0px;top:304.0px;" width="22.0" height="22.0" viewBox="0 0 22 22" fill="none"><path d="M19.5 11H3M10 3.5L2.5 11 10 18.5" stroke="#6e7787" stroke-width="3" stroke-linecap="round" stroke-linejoin="round"/></svg>
<span style="left:36.60px;top:304.68px;font-size:21.40px;line-height:21.40px;font-weight:400;-webkit-text-stroke:0.34px #6e7787;color:#6e7787;letter-spacing:0.000px;">Go Back</span>
<span style="left:12.07px;top:371.32px;font-size:29.63px;line-height:29.63px;font-weight:400;-webkit-text-stroke:0.47px #e8eaed;color:#e8eaed;letter-spacing:-0.000px;">Settings</span>
<span style="left:32.04px;top:438.62px;font-size:14.86px;line-height:14.86px;font-weight:400;-webkit-text-stroke:0.24px #c5c9d0;color:#c5c9d0;letter-spacing:0.000px;">MY BUSINESS</span>
<div style="left:157.9px;top:445.6px;width:136.1px;height:1.5px;background:#8a909b"></div>
<span style="left:31.65px;top:485.91px;font-size:22.44px;line-height:22.44px;font-weight:400;-webkit-text-stroke:0.36px #a6abb5;color:#a6abb5;letter-spacing:0.000px;">Business Profile</span>
<span style="left:31.62px;top:539.77px;font-size:22.84px;line-height:22.84px;font-weight:400;-webkit-text-stroke:0.37px #a6abb5;color:#a6abb5;letter-spacing:0.000px;">My Profile</span>
<span style="left:32.35px;top:593.84px;font-size:22.39px;line-height:22.39px;font-weight:400;-webkit-text-stroke:0.36px #a6abb5;color:#a6abb5;letter-spacing:0.000px;">Company Billing</span>
<span style="left:31.58px;top:647.05px;font-size:23.33px;line-height:23.33px;font-weight:400;-webkit-text-stroke:0.37px #a6abb5;color:#a6abb5;letter-spacing:0.000px;">My Staff</span>
<span style="left:31.65px;top:701.81px;font-size:22.44px;line-height:22.44px;font-weight:400;-webkit-text-stroke:0.36px #a6abb5;color:#a6abb5;letter-spacing:0.000px;">Pipelines</span>
<span style="left:32.07px;top:759.01px;font-size:14.52px;line-height:14.52px;font-weight:400;-webkit-text-stroke:0.23px #c5c9d0;color:#c5c9d0;letter-spacing:0.000px;">BUSINESS SERVICES</span>
<div style="left:207.0px;top:766.8px;width:87.0px;height:1.5px;background:#8a909b"></div>
<div style="left:8.1px;top:792.0px;width:309.8px;height:53.5px;background:#343c4d;border-radius:11px"></div>
<span style="left:32.36px;top:806.98px;font-size:22.23px;line-height:22.23px;font-weight:400;-webkit-text-stroke:0.36px #e8eaed;color:#e8eaed;letter-spacing:0.000px;">Calendars</span>
<span style="left:32.34px;top:860.58px;font-size:22.59px;line-height:22.59px;font-weight:400;-webkit-text-stroke:0.36px #a6abb5;color:#a6abb5;letter-spacing:0.000px;">Conversation AI</span>
<span style="left:31.67px;top:914.93px;font-size:22.17px;line-height:22.17px;font-weight:400;-webkit-text-stroke:0.35px #a6abb5;color:#a6abb5;letter-spacing:-0.000px;">Email Services</span>
<span style="left:31.66px;top:968.82px;font-size:22.30px;line-height:22.30px;font-weight:400;-webkit-text-stroke:0.36px #a6abb5;color:#a6abb5;letter-spacing:0.000px;">Phone Numbers</span>
<span style="left:33.40px;top:1022.66px;font-size:22.37px;line-height:22.37px;font-weight:400;-webkit-text-stroke:0.36px #a6abb5;color:#a6abb5;letter-spacing:0.000px;">WhatsApp</span>
<span style="left:31.65px;top:1076.79px;font-size:22.46px;line-height:22.46px;font-weight:400;-webkit-text-stroke:0.36px #a6abb5;color:#a6abb5;letter-spacing:-0.000px;">Reputation Management</span>
<span style="left:32.51px;top:1133.88px;font-size:14.67px;line-height:14.67px;font-weight:400;-webkit-text-stroke:0.23px #c5c9d0;color:#c5c9d0;letter-spacing:-0.000px;">OTHER SETTINGS</span>
<div style="left:184.9px;top:1140.5px;width:109.1px;height:1.5px;background:#8a909b"></div>
<span style="left:32.35px;top:1180.37px;font-size:22.37px;line-height:22.37px;font-weight:400;-webkit-text-stroke:0.36px #a6abb5;color:#a6abb5;letter-spacing:-0.000px;">Custom Fields</span>
<span style="left:32.35px;top:1234.34px;font-size:22.40px;line-height:22.40px;font-weight:400;-webkit-text-stroke:0.36px #a6abb5;color:#a6abb5;letter-spacing:0.000px;">Custom Values</span>
<span style="left:31.64px;top:1288.89px;font-size:22.58px;line-height:22.58px;font-weight:400;-webkit-text-stroke:0.36px #a6abb5;color:#a6abb5;letter-spacing:-0.000px;">Manage Scoring</span>
<span style="left:31.66px;top:1342.80px;font-size:22.21px;line-height:22.21px;font-weight:400;-webkit-text-stroke:0.36px #a6abb5;color:#a6abb5;letter-spacing:0.000px;">Domains</span>
<span style="left:31.65px;top:1396.34px;font-size:22.40px;line-height:22.40px;font-weight:400;-webkit-text-stroke:0.36px #a6abb5;color:#a6abb5;letter-spacing:-0.000px;">Media</span>
<span style="left:32.04px;top:1450.86px;font-size:21.78px;line-height:21.78px;font-weight:400;-webkit-text-stroke:0.35px #a6abb5;color:#a6abb5;letter-spacing:0.000px;">URL Redirects</span>
<span style="left:31.62px;top:1504.01px;font-size:22.79px;line-height:22.79px;font-weight:400;-webkit-text-stroke:0.36px #a6abb5;color:#a6abb5;letter-spacing:-0.000px;">Integrations</span>
<div style="left:0.0px;top:1510.0px;width:325.0px;height:12.0px;background:#121928"></div>
<div style="left:326.0px;top:421.1px;width:9.0px;height:850.4px;background:#bebebe;border-radius:5px"></div></div>
<div class="L" id="L_cursor"><div style="left:1316.1px;top:1372.9px;width:147.0px;height:147.0px;background:rgba(0,0,0,0.39);border-radius:50%"></div>
<div style="left:1353.8px;top:1410.6px;width:71.2px;height:71.2px;background:#000;border-radius:50%"></div></div>
</body></html>
